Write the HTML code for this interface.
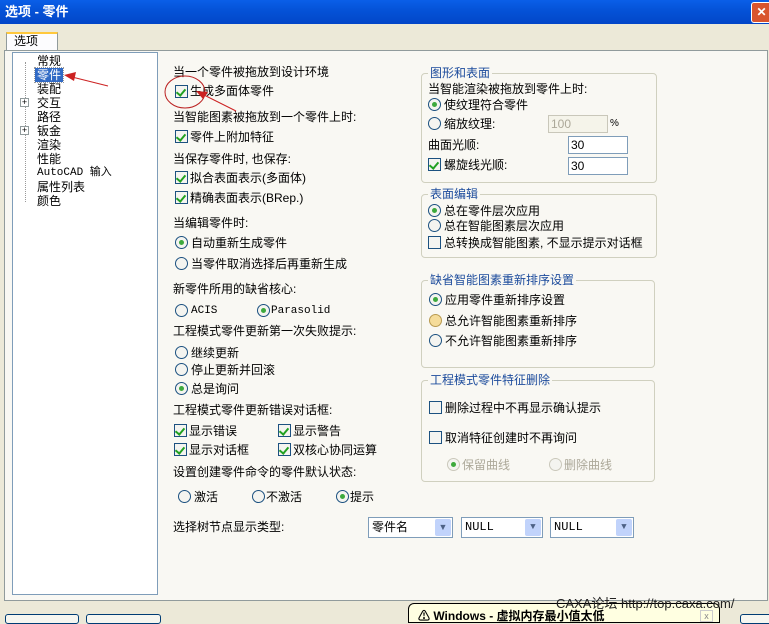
<!DOCTYPE html>
<html><head><meta charset="utf-8"><style>
*{margin:0;padding:0;box-sizing:border-box}
body{width:769px;height:619px;overflow:hidden;background:#ece9d8;position:relative;font-family:"Liberation Sans","Noto Sans CJK SC",sans-serif;font-size:12px;color:#000}
.a{position:absolute;white-space:nowrap;line-height:14px}
.cb{position:absolute;width:13px;height:13px;border:1px solid #1c5180;background:#f4f4f0}
.cb.on::after{content:"";position:absolute;left:2px;top:1px;width:4px;height:7px;border:solid #21a121;border-width:0 2px 2px 0;transform:rotate(40deg)}
.rb{position:absolute;width:13px;height:13px;border:1px solid #1c5180;border-radius:50%;background:#f4f4f0}
.rb.on::after{content:"";position:absolute;left:3px;top:3px;width:5px;height:5px;border-radius:50%;background:#3da93d}
.gb{position:absolute;border:1px solid #d0d0bf;border-radius:4px}
.gl{position:absolute;color:#1c4b9c;background:#f9f8f3;padding:0 2px;line-height:14px;white-space:nowrap}
.in{position:absolute;border:1px solid #7f9db9;background:#fff;height:18px;padding-left:2px;line-height:16px}
.cmb{position:absolute;border:1px solid #7f9db9;background:#fff;height:21px;line-height:19px;padding-left:3px;font-family:"Liberation Mono","Noto Sans CJK SC",monospace}
.cmb i{position:absolute;right:1px;top:1px;width:16px;height:17px;background:#c1d3fb;border-radius:2px;color:#4d6185;font-style:normal;font-size:9px;text-align:center;line-height:17px}
.dis{color:#aca899}
</style></head><body>
<div style="position:absolute;left:0;top:0;width:769px;height:24px;background:linear-gradient(#0a5fe8,#0553d8 40%,#0246c8)"></div>
<div class="a" style="left:5px;top:4px;color:#fff;font-weight:bold;font-size:13px;line-height:16px">选项 - 零件</div>
<div style="position:absolute;left:751px;top:2px;width:21px;height:21px;background:#d9542e;border:1px solid #fff;border-radius:3px;color:#fff;font-weight:bold;text-align:center;line-height:19px">✕</div>
<div style="position:absolute;left:6px;top:32px;width:52px;height:19px;background:#fcfcfe;border:1px solid #919b9c;border-bottom:none;border-top:2px solid #ffc83c"></div>
<div class="a" style="left:14px;top:34px">选项</div>
<div style="position:absolute;left:4px;top:50px;width:764px;height:551px;border:1px solid #919b9c;background:#f9f8f3"></div>
<div style="position:absolute;left:12px;top:52px;width:146px;height:543px;background:#fff;border:1px solid #7f9db9"></div>
<div style="position:absolute;left:164px;top:52px;width:599px;height:543px;background:#f9f8f3"></div>
<div style="position:absolute;left:25px;top:62px;height:140px;border-left:1px dotted #999"></div>
<div class="a" style="left:37px;top:54px">常规</div>
<div class="a" style="left:35px;top:68px;background:#316ac5;color:#fff;padding:0 2px;outline:1px dotted #999">零件</div>
<div class="a" style="left:37px;top:82px">装配</div>
<div class="a" style="left:37px;top:96px">交互</div>
<div class="a" style="left:37px;top:110px">路径</div>
<div class="a" style="left:37px;top:124px">钣金</div>
<div class="a" style="left:37px;top:138px">渲染</div>
<div class="a" style="left:37px;top:152px">性能</div>
<div class="a" style="left:37px;top:166px;font-family:'Liberation Mono','Noto Sans CJK SC',monospace;font-size:11px">AutoCAD 输入</div>
<div class="a" style="left:37px;top:180px">属性列表</div>
<div class="a" style="left:37px;top:194px">颜色</div>
<div style="position:absolute;left:20px;top:98px;width:9px;height:9px;border:1px solid #919b9c;background:#fff;font-size:9px;line-height:7px;text-align:center">+</div>
<div style="position:absolute;left:20px;top:126px;width:9px;height:9px;border:1px solid #919b9c;background:#fff;font-size:9px;line-height:7px;text-align:center">+</div>
<div class="a" style="left:173px;top:65px">当一个零件被拖放到设计环境</div>
<div class="cb on" style="left:175px;top:85px"></div><div class="a" style="left:190px;top:84px">生成多面体零件</div>
<div class="a" style="left:173px;top:110px">当智能图素被拖放到一个零件上时:</div>
<div class="cb on" style="left:175px;top:130px"></div><div class="a" style="left:190px;top:130px">零件上附加特征</div>
<div class="a" style="left:173px;top:152px">当保存零件时, 也保存:</div>
<div class="cb on" style="left:175px;top:171px"></div><div class="a" style="left:190px;top:171px">拟合表面表示(多面体)</div>
<div class="cb on" style="left:175px;top:191px"></div><div class="a" style="left:190px;top:191px">精确表面表示(BRep.)</div>
<div class="a" style="left:173px;top:216px">当编辑零件时:</div>
<div class="rb on" style="left:175px;top:236px"></div><div class="a" style="left:191px;top:236px">自动重新生成零件</div>
<div class="rb" style="left:175px;top:257px"></div><div class="a" style="left:191px;top:257px">当零件取消选择后再重新生成</div>
<div class="a" style="left:173px;top:282px">新零件所用的缺省核心:</div>
<div class="rb" style="left:175px;top:304px"></div><div class="a" style="left:191px;top:304px;font-family:'Liberation Mono',monospace;font-size:11px">ACIS</div>
<div class="rb on" style="left:257px;top:304px"></div><div class="a" style="left:271px;top:304px;font-family:'Liberation Mono',monospace;font-size:11px">Parasolid</div>
<div class="a" style="left:173px;top:324px">工程模式零件更新第一次失败提示:</div>
<div class="rb" style="left:175px;top:346px"></div><div class="a" style="left:191px;top:346px">继续更新</div>
<div class="rb" style="left:175px;top:363px"></div><div class="a" style="left:191px;top:363px">停止更新并回滚</div>
<div class="rb on" style="left:175px;top:382px"></div><div class="a" style="left:191px;top:382px">总是询问</div>
<div class="a" style="left:173px;top:403px">工程模式零件更新错误对话框:</div>
<div class="cb on" style="left:174px;top:424px"></div><div class="a" style="left:189px;top:424px">显示错误</div>
<div class="cb on" style="left:278px;top:424px"></div><div class="a" style="left:293px;top:424px">显示警告</div>
<div class="cb on" style="left:174px;top:443px"></div><div class="a" style="left:189px;top:443px">显示对话框</div>
<div class="cb on" style="left:278px;top:443px"></div><div class="a" style="left:293px;top:443px">双核心协同运算</div>
<div class="a" style="left:173px;top:465px">设置创建零件命令的零件默认状态:</div>
<div class="rb" style="left:178px;top:490px"></div><div class="a" style="left:194px;top:490px">激活</div>
<div class="rb" style="left:252px;top:490px"></div><div class="a" style="left:266px;top:490px">不激活</div>
<div class="rb on" style="left:336px;top:490px"></div><div class="a" style="left:350px;top:490px">提示</div>
<div class="a" style="left:173px;top:520px">选择树节点显示类型:</div>
<div class="cmb" style="left:368px;top:517px;width:85px;font-family:'Liberation Sans','Noto Sans CJK SC',sans-serif">零件名<i>▼</i></div>
<div class="cmb" style="left:461px;top:517px;width:82px">NULL<i>▼</i></div>
<div class="cmb" style="left:550px;top:517px;width:84px">NULL<i>▼</i></div>
<div class="gb" style="left:421px;top:73px;width:236px;height:110px"></div><div class="gl" style="left:428px;top:66px">图形和表面</div>
<div class="a" style="left:428px;top:82px">当智能渲染被拖放到零件上时:</div>
<div class="rb on" style="left:428px;top:98px"></div><div class="a" style="left:444px;top:98px">使纹理符合零件</div>
<div class="rb" style="left:428px;top:117px"></div><div class="a" style="left:444px;top:117px">缩放纹理:</div>
<div class="in dis" style="left:548px;top:115px;width:60px;border-color:#c9c7ba;background:#f5f4ea">100</div><div class="a" style="left:610px;top:117px;font-size:10px">%</div>
<div class="a" style="left:428px;top:138px">曲面光顺:</div>
<div class="in" style="left:568px;top:136px;width:60px">30</div>
<div class="cb on" style="left:428px;top:158px"></div><div class="a" style="left:444px;top:158px">螺旋线光顺:</div>
<div class="in" style="left:568px;top:157px;width:60px">30</div>
<div class="gb" style="left:421px;top:194px;width:236px;height:64px"></div><div class="gl" style="left:428px;top:187px">表面编辑</div>
<div class="rb on" style="left:428px;top:204px"></div><div class="a" style="left:444px;top:204px">总在零件层次应用</div>
<div class="rb" style="left:428px;top:219px"></div><div class="a" style="left:444px;top:219px">总在智能图素层次应用</div>
<div class="cb" style="left:428px;top:236px"></div><div class="a" style="left:444px;top:236px">总转换成智能图素, 不显示提示对话框</div>
<div class="gb" style="left:421px;top:280px;width:234px;height:88px"></div><div class="gl" style="left:428px;top:273px">缺省智能图素重新排序设置</div>
<div class="rb on" style="left:429px;top:293px"></div><div class="a" style="left:445px;top:293px">应用零件重新排序设置</div>
<div class="rb" style="left:429px;top:314px;background:#f5dc9a;border-color:#b89a50"></div><div class="a" style="left:445px;top:314px">总允许智能图素重新排序</div>
<div class="rb" style="left:429px;top:334px"></div><div class="a" style="left:445px;top:334px">不允许智能图素重新排序</div>
<div class="gb" style="left:421px;top:380px;width:234px;height:102px"></div><div class="gl" style="left:428px;top:373px">工程模式零件特征删除</div>
<div class="cb" style="left:429px;top:401px"></div><div class="a" style="left:445px;top:401px">删除过程中不再显示确认提示</div>
<div class="cb" style="left:429px;top:431px"></div><div class="a" style="left:445px;top:431px">取消特征创建时不再询问</div>
<div class="rb on dis" style="left:447px;top:458px;border-color:#cac8bb"></div><div class="a dis" style="left:462px;top:458px">保留曲线</div>
<div class="rb dis" style="left:549px;top:458px;border-color:#cac8bb"></div><div class="a dis" style="left:564px;top:458px">删除曲线</div>
<div style="position:absolute;left:5px;top:614px;width:74px;height:10px;border:1px solid #003c74;border-radius:3px;background:#f6f6f0"></div>
<div style="position:absolute;left:86px;top:614px;width:75px;height:10px;border:1px solid #003c74;border-radius:3px;background:#f6f6f0"></div>
<div style="position:absolute;left:740px;top:614px;width:40px;height:10px;border:1px solid #003c74;border-radius:3px;background:#f6f6f0"></div>
<div style="position:absolute;left:408px;top:603px;width:312px;height:20px;background:#ffffe1;border:1px solid #000;border-radius:6px 6px 0 0"></div>
<div class="a" style="left:418px;top:609px;font-weight:bold;font-size:12px">⚠ Windows - 虚拟内存最小值太低</div>
<div style="position:absolute;left:700px;top:610px;width:13px;height:12px;border:1px solid #ccc;font-size:9px;color:#888;text-align:center;line-height:10px">x</div>
<div class="a" style="left:556px;top:596px;font-size:13px;color:#222;line-height:16px">CAXA论坛 http://top.caxa.com/</div>
<svg style="position:absolute;left:0;top:0" width="769" height="619">
<ellipse cx="185" cy="92" rx="20" ry="16" fill="none" stroke="#b22" stroke-width="1"/>
<line x1="108" y1="86" x2="68" y2="76" stroke="#c22" stroke-width="1"/>
<polygon points="64,75 76,72 74,81" fill="#c22"/>
<line x1="236" y1="111" x2="200" y2="93" stroke="#c22" stroke-width="1"/>
<polygon points="196,91 208,92 203,99" fill="#c22"/>
</svg>
</body></html>
